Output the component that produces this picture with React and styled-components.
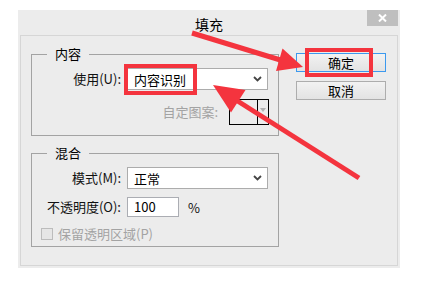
import React from "react";
import styled, { createGlobalStyle } from "styled-components";

const GlobalStyle = createGlobalStyle`
  html, body { margin: 0; padding: 0; background: #ffffff; }
  body { font-family: "Noto Sans CJK SC", "Noto Sans", sans-serif; color: #111; }
`;

const Page = styled.div`
  position: relative;
  width: 430px;
  height: 300px;
  padding: 10px 0 0 18px;
  box-sizing: border-box;
  overflow: hidden;
`;

const Dialog = styled.div`
  width: 382px;
  height: 258px;
  box-sizing: border-box;
  background: #ececec;
  display: flex;
  flex-direction: column;
  padding: 0 2px 2px 2px;
`;

const TitleBar = styled.div`
  height: 25px;
  display: grid;
  grid-template-columns: 1fr auto 1fr;
  align-items: center;
`;

const Title = styled.div`
  grid-column: 2;
  font-size: 14px;
  line-height: 18px;
  color: #000;
  padding-top: 2px;
`;

const CloseButton = styled.div`
  grid-column: 3;
  justify-self: end;
  align-self: start;
  width: 31px;
  height: 16px;
  background: #bfbfbf;
  display: flex;
  align-items: center;
  justify-content: center;
`;

const Panel = styled.div`
  flex: 1;
  border: 1px solid #d6d6d6;
  display: flex;
  gap: 17px;
  padding: 10px 0 0 10px;
`;

const LeftColumn = styled.div`
  width: 248px;
  display: flex;
  flex-direction: column;
  gap: 9px;
`;

const Group = styled.fieldset`
  margin: 0;
  box-sizing: border-box;
  height: ${(p) => p.$h}px;
  border: 1px solid #a3a3a3;
  padding: 6px 9px 0 0;
  display: flex;
  flex-direction: column;
  gap: ${(p) => p.$gap}px;
`;

const Legend = styled.legend`
  margin-left: 15px;
  padding: 0 8px;
  font-size: 13px;
  line-height: 16px;
  color: #000;
`;

const FormRow = styled.div`
  display: grid;
  grid-template-columns: 89px auto;
  column-gap: 6px;
  align-items: center;
`;

const Label = styled.span`
  text-align: right;
  font-size: 13px;
  line-height: 16px;
  color: #111;
  white-space: nowrap;
`;

const Select = styled.div`
  width: 141px;
  height: 22px;
  box-sizing: border-box;
  background: #fff;
  border: 1px solid #acacac;
  display: flex;
  align-items: center;
  justify-content: space-between;
  padding: 0 5px 0 6px;
  font-size: 13px;
  color: #000;
`;

const PatternRow = styled.div`
  display: flex;
  justify-content: flex-end;
  align-items: center;
  gap: 11px;
  margin-top: -1px;
`;

const MutedLabel = styled.span`
  font-size: 13px;
  line-height: 16px;
  color: #a3a3a3;
`;

const PatternBox = styled.div`
  width: 40px;
  height: 26px;
  box-sizing: border-box;
  border: 1px solid #000;
  display: grid;
  grid-template-columns: 27px 1fr;
`;

const PatternDrop = styled.div`
  border-left: 1px solid #000;
  display: flex;
  align-items: flex-start;
  justify-content: center;
  padding-top: 8px;
`;

const InputWrap = styled.div`
  display: flex;
  align-items: center;
  gap: 9px;
`;

const Input = styled.div`
  width: 52px;
  height: 20px;
  box-sizing: border-box;
  background: #fff;
  border: 1px solid #abadb3;
  padding: 0 6px;
  font-size: 13px;
  line-height: 18px;
  color: #000;
`;

const Unit = styled.span`
  font-size: 13px;
  color: #111;
`;

const CheckRow = styled.div`
  display: flex;
  align-items: center;
  gap: 5px;
  padding-left: 9px;
  margin-top: 1px;
`;

const CheckBox = styled.span`
  width: 12px;
  height: 12px;
  box-sizing: border-box;
  border: 1px solid #bcbcbc;
  background: #e6e6e6;
`;

const RightColumn = styled.div`
  display: flex;
  flex-direction: column;
  gap: 9px;
  padding-top: 7px;
`;

const Button = styled.div`
  width: 90px;
  height: 19px;
  box-sizing: border-box;
  border: 1px solid ${(p) => (p.$primary ? "#3c99ee" : "#adadad")};
  background: linear-gradient(#f2f2f2, #e3e3e3);
  display: flex;
  align-items: center;
  justify-content: center;
  font-size: 13px;
  color: #000;
`;

const Annotations = styled.svg`
  position: absolute;
  left: 0;
  top: 0;
  pointer-events: none;
`;

const Chevron = () => (
  <svg width="9" height="6" viewBox="0 0 9 6">
    <polyline points="1,1 4.5,4.5 8,1" fill="none" stroke="#444" strokeWidth="1.8" />
  </svg>
);

const RED = "#f4343e";

export default function App() {
  return (
    <>
      <GlobalStyle />
      <Page>
        <Dialog>
          <TitleBar>
            <Title>填充</Title>
            <CloseButton>
              <svg width="9" height="8" viewBox="0 0 9 8">
                <path d="M1 0.5 L8 7.5 M8 0.5 L1 7.5" stroke="#fff" strokeWidth="2" />
              </svg>
            </CloseButton>
          </TitleBar>
          <Panel>
            <LeftColumn>
              <Group $h={90} $gap={10}>
                <Legend>内容</Legend>
                <FormRow>
                  <Label>使用(U):</Label>
                  <Select>
                    <span>内容识别</span>
                    <Chevron />
                  </Select>
                </FormRow>
                <PatternRow>
                  <MutedLabel>自定图案:</MutedLabel>
                  <PatternBox>
                    <span />
                    <PatternDrop>
                      <svg width="6" height="4" viewBox="0 0 6 4">
                        <polygon points="0,0 6,0 3,4" fill="#b0b0b0" />
                      </svg>
                    </PatternDrop>
                  </PatternBox>
                </PatternRow>
              </Group>
              <Group $h={102} $gap={8}>
                <Legend>混合</Legend>
                <FormRow>
                  <Label>模式(M):</Label>
                  <Select>
                    <span>正常</span>
                    <Chevron />
                  </Select>
                </FormRow>
                <FormRow>
                  <Label>不透明度(O):</Label>
                  <InputWrap>
                    <Input>100</Input>
                    <Unit>%</Unit>
                  </InputWrap>
                </FormRow>
                <CheckRow>
                  <CheckBox />
                  <MutedLabel>保留透明区域(P)</MutedLabel>
                </CheckRow>
              </Group>
            </LeftColumn>
            <RightColumn>
              <Button $primary>确定</Button>
              <Button>取消</Button>
            </RightColumn>
          </Panel>
        </Dialog>
        <Annotations width="430" height="300" viewBox="0 0 430 300">
          <rect x="126" y="66" width="69" height="27" fill="none" stroke={RED} strokeWidth="4" />
          <rect x="307" y="50" width="64" height="25" fill="none" stroke={RED} strokeWidth="4" />
          <line x1="192" y1="33" x2="282" y2="60.5" stroke={RED} strokeWidth="5" />
          <polygon points="303,67 276,71 282.5,48.5" fill={RED} />
          <line x1="359" y1="178" x2="236" y2="100" stroke={RED} strokeWidth="5" />
          <polygon points="213,85 245.5,90 231,112.5" fill={RED} />
        </Annotations>
      </Page>
    </>
  );
}
